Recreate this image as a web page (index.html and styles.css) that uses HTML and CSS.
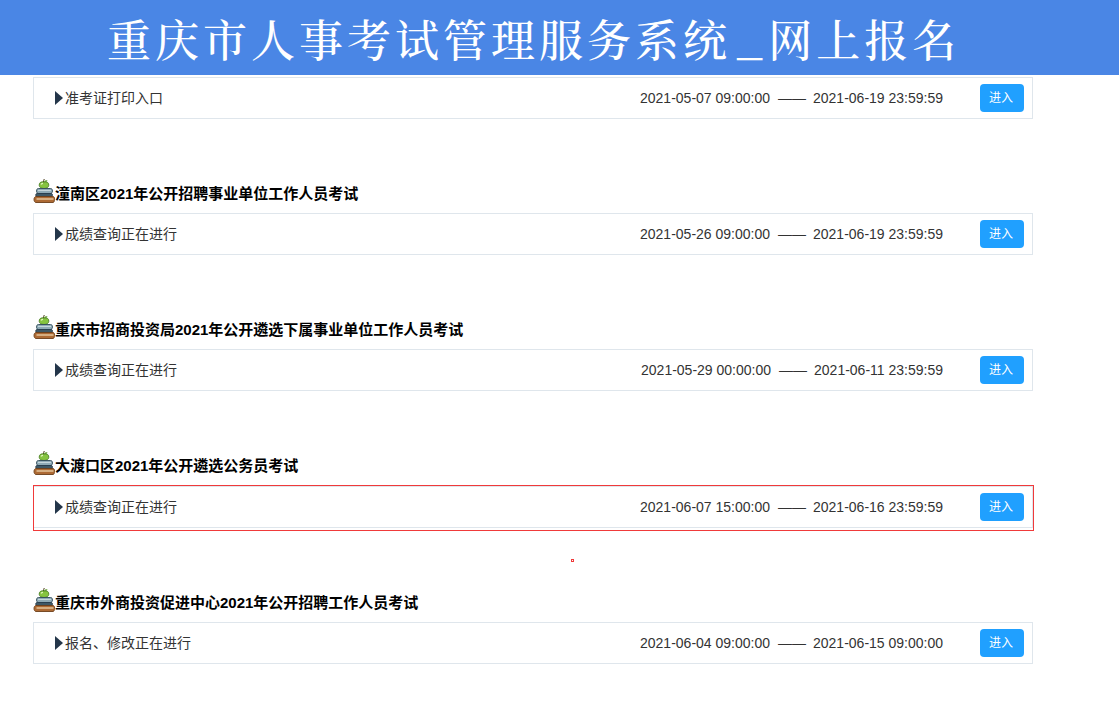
FILE: index.html
```html
<!DOCTYPE html>
<html lang="zh-CN">
<head>
<meta charset="utf-8">
<title>重庆市人事考试管理服务系统_网上报名</title>
<link rel="stylesheet" href="styles.css">
</head>
<body>
<svg class="defs" width="0" height="0" aria-hidden="true">
  <symbol id="books" viewBox="0 0 22 24">
    <path d="M10.500 3c0-1 .2-2 .8-3" fill="none" stroke="#4a3a18" stroke-width="1"/>
    <path d="M11 2.500c1-1.200 2.500-1.500 3.500-1-.5 1.200-2 1.800-3.500 1z" fill="#5f9e2c"/>
    <path d="M11 3c-3-.8-5 .8-4.800 3.300.2 2 1.800 3.200 4.800 3.200s4.600-1.200 4.800-3.200C16 3.800 14 2.200 11 3z" fill="#86c440" stroke="#3f7418" stroke-width=".8"/>
    <path d="M8 5.500c.5-.8 1.200-1.100 2-1.100" fill="none" stroke="#e2f3bd" stroke-width="1.100"/>
    <path d="M5.500 9.500h12c1.300 0 2 1 2 2.400s-.7 2.600-2 2.600H5.500c-1.300 0-2-1.200-2-2.600s.7-2.400 2-2.400z" fill="#8eaab6" stroke="#2f4a58" stroke-width=".9"/>
    <path d="M5 11.500h13" stroke="#c5d6dc" stroke-width="1"/>
    <path d="M4 14.500h14c1 0 1.500.6 1.500 1.500s-.5 1.500-1.500 1.500H4c-.8 0-1.300-.6-1.300-1.500S3.200 14.500 4 14.500z" fill="#3e5866" stroke="#25394a" stroke-width=".8"/>
    <path d="M3 17.500h17c1 0 1.500.9 1.500 2.800S21 23.500 20 23.500H3c-1.200 0-2-1.400-2-3s.8-3 2-3z" fill="#ad6a34" stroke="#6c3f1a" stroke-width=".9"/>
    <path d="M3.500 20h17" stroke="#f2dcb6" stroke-width="1.200"/>
  </symbol>
</svg>

<header class="banner">
  <h1 class="banner-title">重庆市人事考试管理服务系统<span class="banner-us">_</span>网上报名</h1>
</header>

<main class="list">
  <section class="exam exam-first">
    <div class="row">
      <span class="row-name"><i class="arrow"></i>准考证打印入口</span>
      <span class="row-time">2021-05-07 09:00:00<span class="dash">——</span>2021-06-19 23:59:59</span>
      <a class="enter">进入</a>
    </div>
  </section>

  <section class="exam">
    <h2 class="exam-title"><svg class="book"><use href="#books"/></svg>潼南区2021年公开招聘事业单位工作人员考试</h2>
    <div class="row">
      <span class="row-name"><i class="arrow"></i>成绩查询正在进行</span>
      <span class="row-time">2021-05-26 09:00:00<span class="dash">——</span>2021-06-19 23:59:59</span>
      <a class="enter">进入</a>
    </div>
  </section>

  <section class="exam">
    <h2 class="exam-title"><svg class="book"><use href="#books"/></svg>重庆市招商投资局2021年公开遴选下属事业单位工作人员考试</h2>
    <div class="row">
      <span class="row-name"><i class="arrow"></i>成绩查询正在进行</span>
      <span class="row-time">2021-05-29 00:00:00<span class="dash">——</span>2021-06-11 23:59:59</span>
      <a class="enter">进入</a>
    </div>
  </section>

  <section class="exam">
    <h2 class="exam-title"><svg class="book"><use href="#books"/></svg>大渡口区2021年公开遴选公务员考试</h2>
    <div class="marked">
      <div class="row row-marked">
        <span class="row-name"><i class="arrow"></i>成绩查询正在进行</span>
        <span class="row-time">2021-06-07 15:00:00<span class="dash">——</span>2021-06-16 23:59:59</span>
        <a class="enter">进入</a>
      </div>
    </div>
    <div class="dot-line"><i class="dot"></i></div>
  </section>

  <section class="exam exam-after">
    <h2 class="exam-title"><svg class="book"><use href="#books"/></svg>重庆市外商投资促进中心2021年公开招聘工作人员考试</h2>
    <div class="row">
      <span class="row-name"><i class="arrow"></i>报名、修改正在进行</span>
      <span class="row-time">2021-06-04 09:00:00<span class="dash">——</span>2021-06-15 09:00:00</span>
      <a class="enter">进入</a>
    </div>
  </section>
</main>
</body>
</html>
```

FILE: styles.css
```css
* { box-sizing: border-box; }
html, body { margin: 0; padding: 0; background: #fff; }
body {
  height: 712px;
  overflow: hidden;
  font-family: "Liberation Sans", "Noto Sans CJK SC", sans-serif;
  font-size: 14px;
  color: #333;
}
.defs { display: block; height: 0; }
.banner {
  height: 75px;
  background: #4a86e5;
  padding-left: 107px;
  display: flex;
  align-items: center;
}
.banner-title {
  margin: 0;
  font-family: "Noto Serif CJK SC", "Noto Sans CJK SC", serif;
  font-size: 44px;
  font-weight: 500;
  letter-spacing: 4px;
  color: #fff;
  white-space: nowrap;
}
.banner-us { margin-left: 6px; letter-spacing: 6px; }
.list { padding-left: 33px; width: 1033px; box-sizing: content-box; }
.exam { margin-top: 60px; }
.exam-first { margin-top: 2px; }
.exam-after { margin-top: 0; }
.exam-title {
  margin: 0 0 10px;
  height: 24px;
  display: flex;
  align-items: flex-end;
  font-size: 15px;
  font-weight: 700;
  line-height: 18px;
  color: #000;
}
.book { width: 22px; height: 24px; flex: none; }
.row {
  height: 42px;
  width: 1000px;
  border: 1px solid #dfe6ec;
  display: flex;
  align-items: center;
  padding: 0 8px 0 21px;
}
.row-marked {
  width: 999px;
  border-left: 0;
}
.row-name { display: flex; align-items: center; flex: 1; padding-bottom: 2px; }
.arrow {
  width: 0;
  height: 0;
  border-left: 8px solid #24364a;
  border-top: 7px solid transparent;
  border-bottom: 7px solid transparent;
  margin-top: 2px;
  margin-right: 2px;
}
.row-time { margin-right: 37px; white-space: nowrap; }
.dash { margin: 0 7px 0 8px; }
.enter {
  width: 44px;
  height: 28px;
  line-height: 28px;
  padding-right: 2px;
  text-align: center;
  border-radius: 4px;
  background: #20a0ff;
  color: #fff;
  font-size: 12px;
}
.marked {
  width: 1001px;
  height: 46px;
  border: 1px solid #f03a3a;
}
.dot-line { height: 57px; padding: 28px 0 0 538px; }
.dot { width: 3px; height: 3px; border: 1px solid #f03a3a; display: block; }
```
